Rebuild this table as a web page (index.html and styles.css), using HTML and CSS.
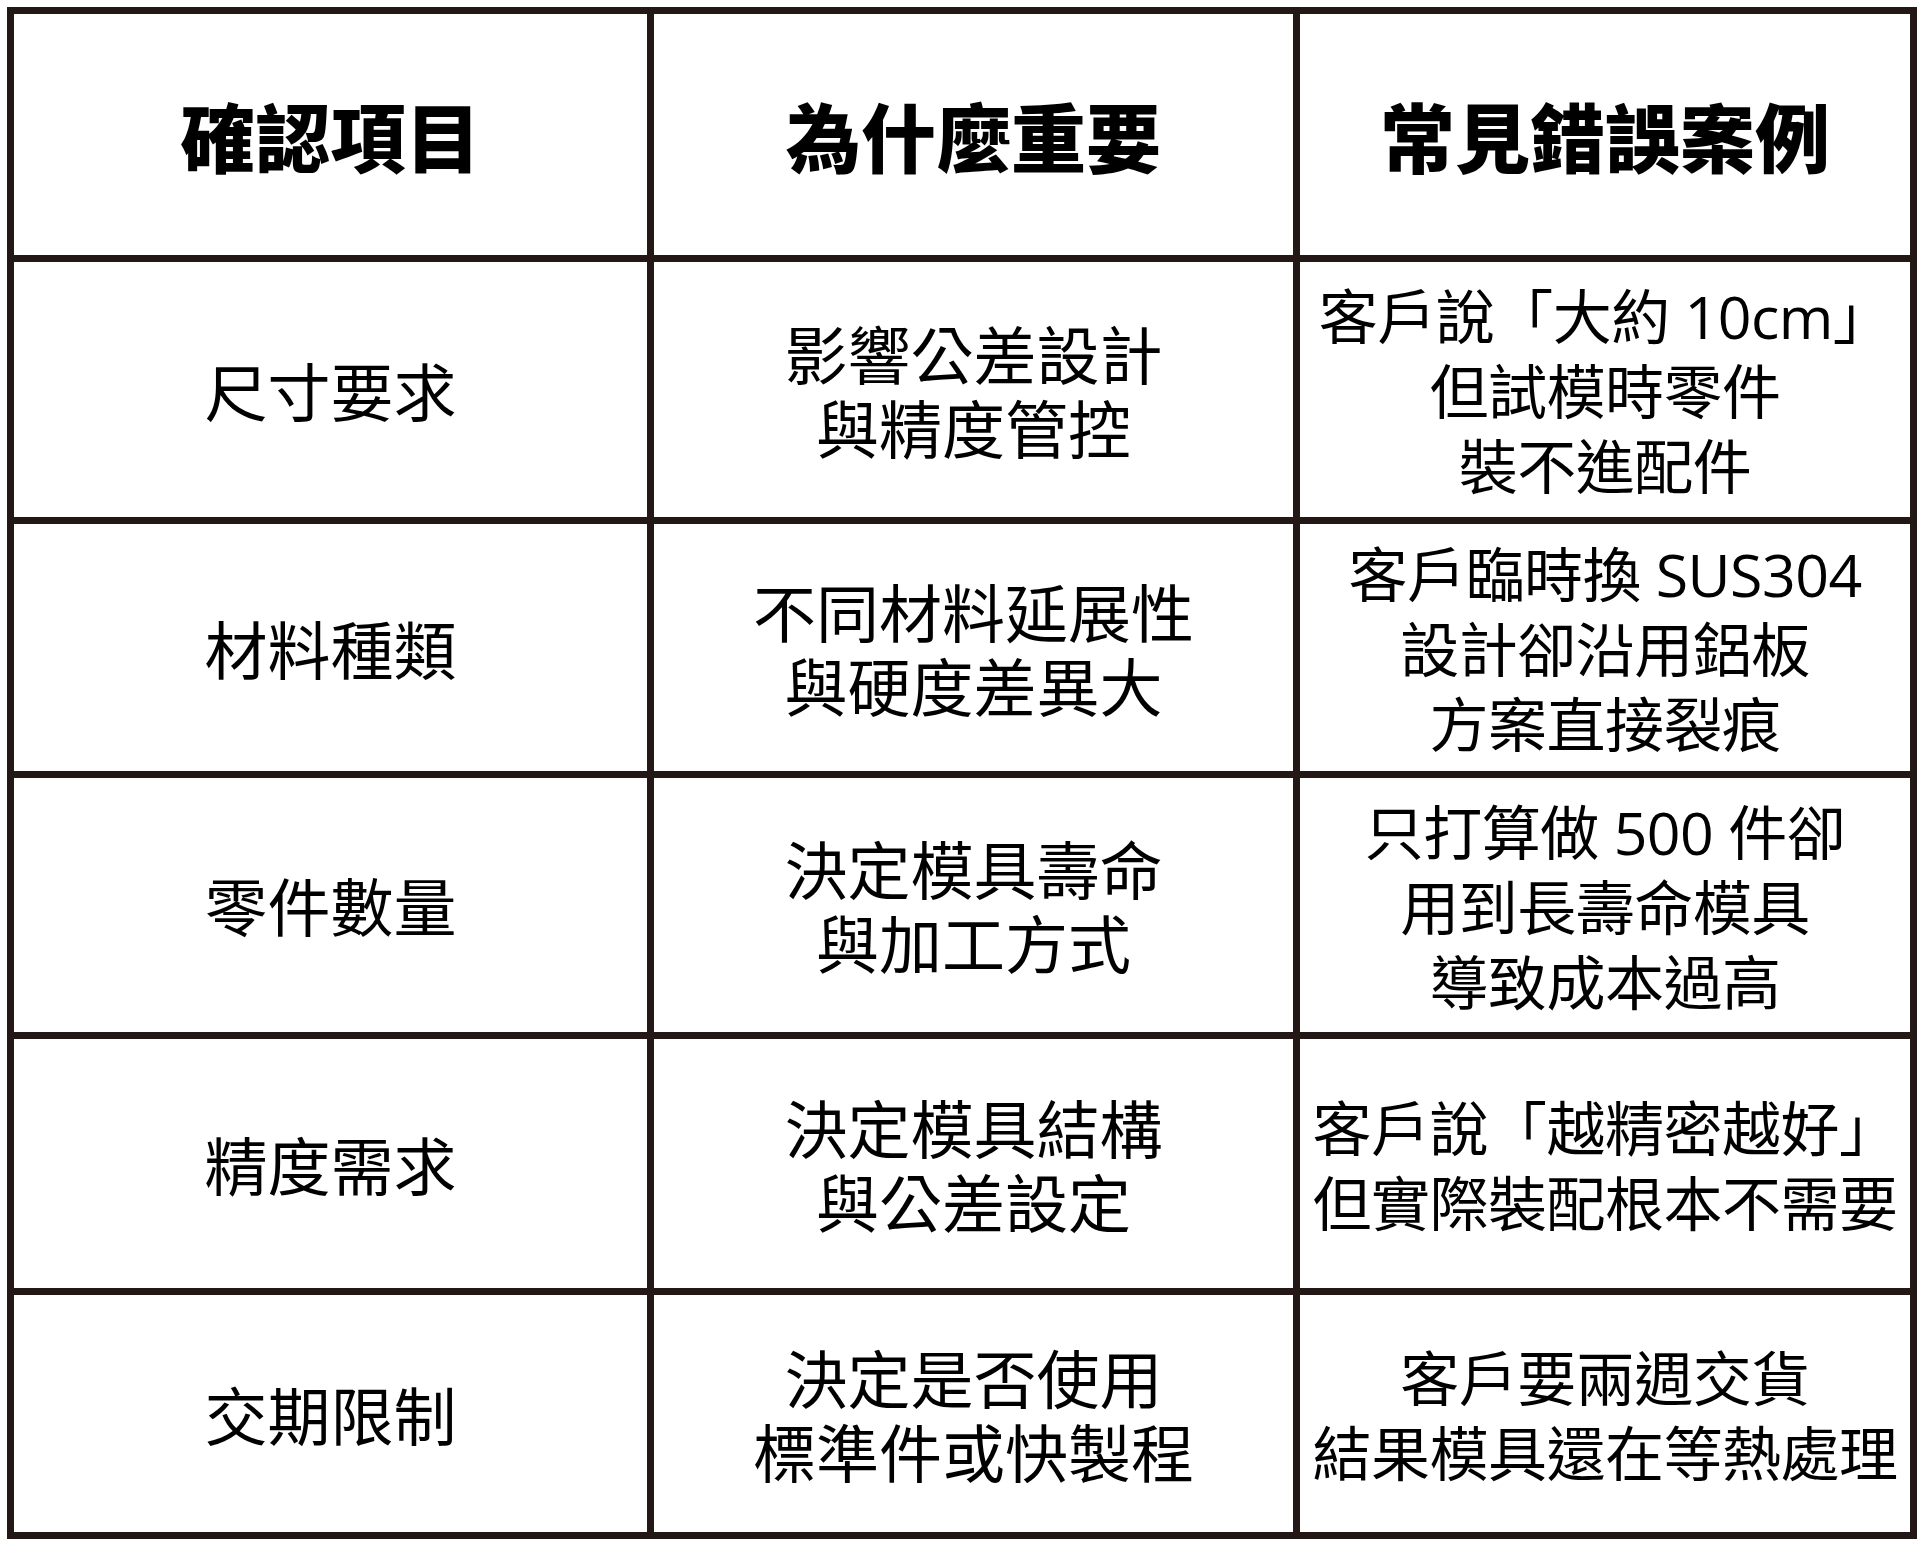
FILE: index.html
```html
<!DOCTYPE html>
<html lang="zh-Hant">
<head>
<meta charset="utf-8">
<title>確認項目</title>
<link rel="stylesheet" href="styles.css">
</head>
<body>
<div class="table">
  <div class="cell head">確認項目</div>
  <div class="cell head">為什麼重要</div>
  <div class="cell head">常見錯誤案例</div>

  <div class="cell">尺寸要求</div>
  <div class="cell">影響公差設計<br>與精度管控</div>
  <div class="cell case">客戶說「大約 10cm」<br>但試模時零件<br>裝不進配件</div>

  <div class="cell">材料種類</div>
  <div class="cell">不同材料延展性<br>與硬度差異大</div>
  <div class="cell case">客戶臨時換 SUS304<br>設計卻沿用鋁板<br>方案直接裂痕</div>

  <div class="cell">零件數量</div>
  <div class="cell">決定模具壽命<br>與加工方式</div>
  <div class="cell case">只打算做 500 件卻<br>用到長壽命模具<br>導致成本過高</div>

  <div class="cell">精度需求</div>
  <div class="cell">決定模具結構<br>與公差設定</div>
  <div class="cell case">客戶說「越精密越好」<br>但實際裝配根本不需要</div>

  <div class="cell">交期限制</div>
  <div class="cell">決定是否使用<br>標準件或快製程</div>
  <div class="cell case">客戶要兩週交貨<br>結果模具還在等熱處理</div>
</div>
</body>
</html>
```

FILE: styles.css
```css
html, body {
  margin: 0;
  padding: 0;
  background: #ffffff;
}

body {
  width: 1920px;
  height: 1541px;
  overflow: hidden;
}

.table {
  margin: 7px 0 0 7px;
  width: 1896px;
  display: grid;
  grid-template-columns: 633px 639px 610px;
  grid-template-rows: 241px 255px 247px 254px 249px 237px;
  gap: 7px;
  padding: 7px;
  background: #231815;
  font-family: "Noto Sans CJK TC", "Noto Sans CJK SC", sans-serif;
  color: #000000;
}

.cell {
  background: #ffffff;
  display: flex;
  align-items: center;
  justify-content: center;
  text-align: center;
  padding-top: 4px;
  font-family: Lato, "Noto Sans CJK TC", "Noto Sans CJK SC", sans-serif;
  font-size: 63px;
  line-height: 74px;
  font-weight: 400;
  white-space: nowrap;
}

.cell.head {
  padding-top: 0;
  font-family: "Noto Sans CJK TC", "Noto Sans CJK SC", sans-serif;
  font-size: 75px;
  font-weight: 900;
  line-height: 1;
}

.cell.case {
  font-family: "Open Sans", "Noto Sans CJK TC", "Noto Sans CJK SC", sans-serif;
  font-size: 59px;
  line-height: 75px;
  letter-spacing: -0.5px;
}
```
